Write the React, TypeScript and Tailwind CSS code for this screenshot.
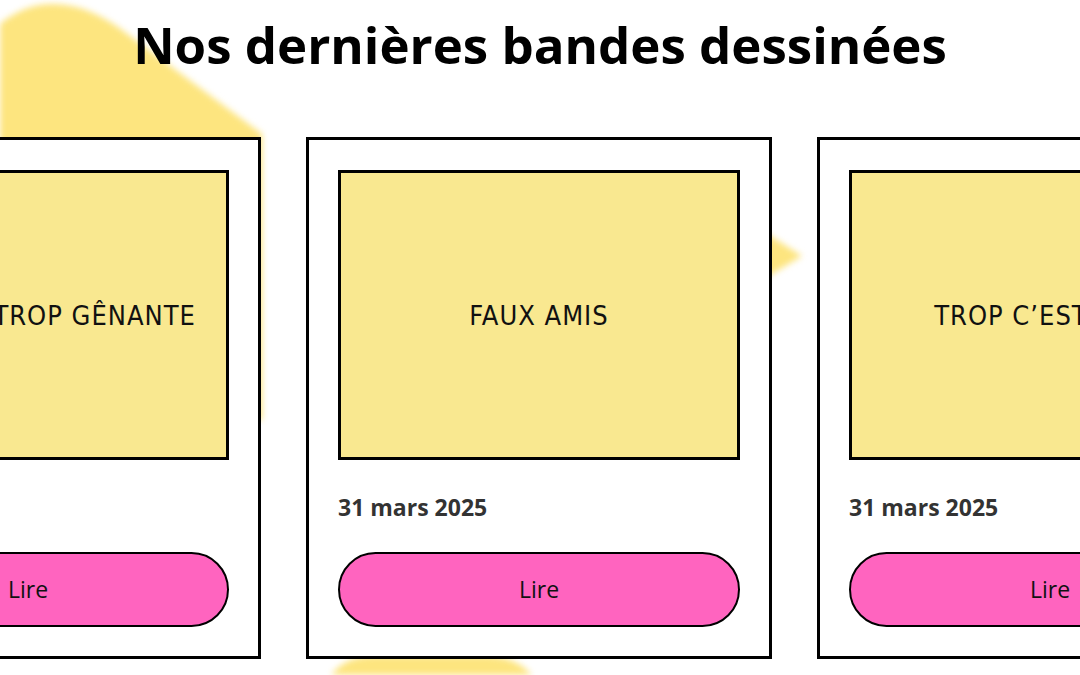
import React from "react";

type Comic = { title: string; date: string };

const comics: Comic[] = [
  { title: "LA PAUSE TROP GÊNANTE", date: "31 mars 2025" },
  { title: "FAUX AMIS", date: "31 mars 2025" },
  { title: "TROP C’EST TROP", date: "31 mars 2025" },
];

function Blobs() {
  return (
    <svg
      className="absolute inset-0 blur-[3px]"
      width="1080"
      height="675"
      viewBox="0 0 1080 675"
      aria-hidden="true"
    >
      {/* big rounded hill at top left */}
      <path
        d="M -30 55 C 0 16, 28 3, 55 4 C 80 5, 98 14, 118 27 L 262 134 L 262 420 L -30 420 Z"
        fill="#fde57f"
      />
      {/* corner peeking between the middle and right cards */}
      <path d="M 745 220 L 802 256 L 745 290 Z" fill="#fde57f" />
      {/* dome under the middle card */}
      <path
        d="M 315 700 C 332 668, 345 657, 372 656 L 488 656 C 515 657, 532 668, 548 700 Z"
        fill="#fde57f"
      />
    </svg>
  );
}

function Card({ comic }: { comic: Comic }) {
  return (
    <div className="w-[466px] shrink-0 border-[3px] border-black bg-white px-[29px] pt-[30px] pb-[29px]">
      <div className="flex h-[290px] items-center justify-center border-[3px] border-black bg-[#f9e890]">
        <span className="whitespace-nowrap text-[27px] leading-none tracking-[1px] text-[#111] font-['DejaVu_Sans_Condensed','DejaVu_Sans',sans-serif] font-stretch-condensed">
          {comic.title}
        </span>
      </div>
      <p className="mt-[32px] mb-[30px] text-[23px] leading-[30px] font-bold text-[#333] font-['Open_Sans',sans-serif]">
        {comic.date}
      </p>
      <button className="flex h-[75px] w-full items-center justify-center rounded-full border-2 border-black bg-[#ff64bf] text-[23px] text-[#111] font-['Open_Sans',sans-serif]">
        Lire
      </button>
    </div>
  );
}

export default function App() {
  return (
    <div className="relative h-[675px] w-[1080px] overflow-hidden bg-white">
      <Blobs />
      <div className="relative flex flex-col items-center">
        <h2 className="mt-[14px] text-[51px] leading-[60px] font-bold text-black font-['Open_Sans',sans-serif]">
          Nos dernières bandes dessinées
        </h2>
        <div className="mt-[63px] flex w-full justify-center gap-[45px] pr-[2px]">
          {comics.map((c) => (
            <Card key={c.title} comic={c} />
          ))}
        </div>
      </div>
    </div>
  );
}
